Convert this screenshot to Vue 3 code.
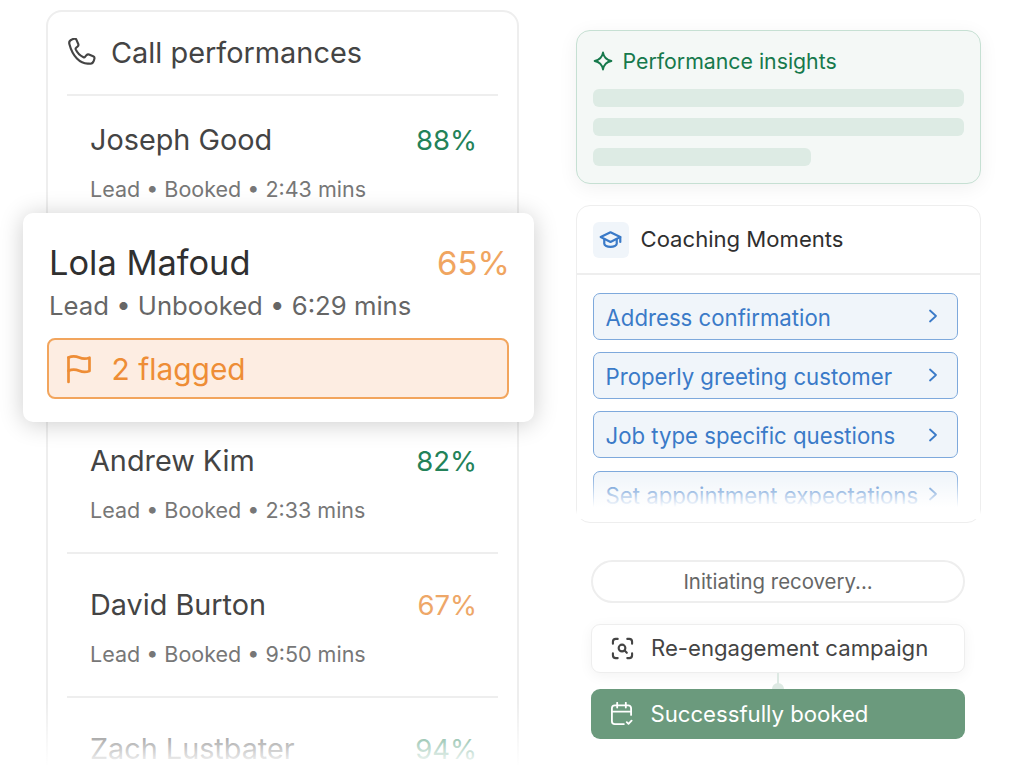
<template>
  <div class="page">
    <!-- Left column -->
    <section class="calls">
      <header class="calls-head">
        <svg class="phone" viewBox="2 1 23.500 23.500" fill="none" stroke="#444" stroke-width="1.800" stroke-linecap="round" stroke-linejoin="round">
          <path d="M3.200 6.200c-.5-1.800.4-3.400 2.100-4l1.600-.6c.9-.3 1.800.1 2.200 1l1.500 3.400c.3.800.1 1.600-.5 2.100l-1.300 1.100c-.4.300-.5.800-.3 1.300 1.300 3 3.500 5.200 6.500 6.600.5.200 1 .1 1.300-.3l1.200-1.400c.6-.6 1.400-.8 2.100-.5l3.500 1.500c.9.400 1.300 1.300 1 2.200l-.5 1.600c-.6 1.700-2.300 2.700-4 2.200C12 23.100 5.700 15.800 3.200 6.200Z" />
        </svg>
        <span>Call performances</span>
      </header>
      <div class="rows">
        <div v-for="row in rows" :key="row.name" class="row">
          <div class="row-top">
            <span class="name">{{ row.name }}</span>
            <span class="score" :class="row.tone">{{ row.score }}</span>
          </div>
          <div class="meta">{{ row.meta }}</div>
        </div>
      </div>
      <div class="calls-fade"></div>
    </section>

    <!-- Floating card over the list -->
    <div class="flagged-card">
      <div class="row-top">
        <span class="flagged-name">Lola Mafoud</span>
        <span class="flagged-score">65%</span>
      </div>
      <div class="flagged-meta">Lead • Unbooked • 6:29 mins</div>
      <div class="flag-bar">
        <svg class="flag" viewBox="0 0 26 30" fill="none" stroke="#ee8d36" stroke-width="2.700" stroke-linecap="round" stroke-linejoin="round">
          <path d="M2.500 28V3.500" />
          <path d="M2.500 3.500c3.800-1.800 7.200-1.500 10.700 0s6.800 1.500 10.300.2v13.300c-3.500 1.300-6.800 1.300-10.300-.2s-6.900-1.800-10.700 0" />
        </svg>
        <span>2 flagged</span>
      </div>
    </div>

    <!-- Right column -->
    <div class="side">
      <section class="insights">
        <div class="insights-title">
          <svg class="spark" viewBox="0 0 20 20" fill="none" stroke="#16794c" stroke-width="1.800" stroke-linejoin="round">
            <path d="M10 1.500c.8 4.800 3.500 7.600 8.400 8.500-4.900.9-7.600 3.700-8.400 8.500-.8-4.800-3.500-7.600-8.400-8.500 4.900-.9 7.600-3.700 8.400-8.500Z" />
          </svg>
          <span>Performance insights</span>
        </div>
        <div class="bar"></div>
        <div class="bar"></div>
        <div class="bar short"></div>
      </section>

      <section class="coaching">
        <header class="coaching-head">
          <div class="cap-box">
            <svg viewBox="0 0 24 24" fill="none" stroke="#3a7ac8" stroke-width="2.300" stroke-linecap="round" stroke-linejoin="round">
              <path d="M12 4.500 1.800 9.500 12 14.500l10.200-5L12 4.500Z" />
              <path d="M5.500 11.500v5c0 1.800 3 3.200 6.500 3.200s6.500-1.400 6.500-3.200v-5" />
              <path d="M22.200 9.500v5" />
            </svg>
          </div>
          <span class="coaching-title">Coaching Moments</span>
        </header>
        <div class="moments">
          <div v-for="item in moments" :key="item" class="moment">
            <span>{{ item }}</span>
            <svg class="chev" viewBox="0 0 10 16" fill="none" stroke="#3a7ac8" stroke-width="1.800" stroke-linecap="round" stroke-linejoin="round">
              <path d="M2 2.500 8 8l-6 5.500" />
            </svg>
          </div>
          <div class="moments-fade"></div>
        </div>
      </section>

      <div class="recovery">
        <div class="pill">Initiating recovery...</div>
        <div class="step">
          <svg class="step-icon" viewBox="0 0 24 24" fill="none" stroke="#444" stroke-width="2.200" stroke-linecap="round" stroke-linejoin="round">
            <path d="M2 7V5a3 3 0 0 1 3-3h2M17 2h2a3 3 0 0 1 3 3v2M22 17v2a3 3 0 0 1-3 3h-2M7 22H5a3 3 0 0 1-3-3v-2" />
            <circle cx="11.500" cy="11.500" r="3.500" />
            <path d="m14.200 14.200 2.300 2.300" />
          </svg>
          <span>Re-engagement campaign</span>
        </div>
        <div class="link"><i></i></div>
        <div class="booked">
          <svg class="step-icon" viewBox="0 0 24 24" fill="none" stroke="#fff" stroke-width="1.900" stroke-linecap="round" stroke-linejoin="round">
            <path d="M22 13.500V6.500a3 3 0 0 0-3-3H5a3 3 0 0 0-3 3V20a3 3 0 0 0 3 3h9.500" />
            <path d="M2 10h20M7.500 .8v5M16.500 .8v5" />
            <path d="m17.500 21 1.800 1.800 3.200-3.300" />
          </svg>
          <span>Successfully booked</span>
        </div>
      </div>
    </div>
  </div>
</template>

<script setup>
const rows = [
  { name: 'Joseph Good', score: '88%', tone: 'good', meta: 'Lead • Booked • 2:43 mins' },
  { name: 'Andrew Kim', score: '82%', tone: 'good', meta: 'Lead • Booked • 2:33 mins' },
  { name: 'David Burton', score: '67%', tone: 'warn', meta: 'Lead • Booked • 9:50 mins' },
  { name: 'Zach Lustbater', score: '94%', tone: 'good', meta: '' }
]

const moments = [
  'Address confirmation',
  'Properly greeting customer',
  'Job type specific questions',
  'Set appointment expectations'
]
</script>

<style>
html,
body {
  margin: 0;
  background: #fff;
  overflow: hidden;
}
</style>

<style scoped>
* {
  box-sizing: border-box;
}

.page {
  position: relative;
  display: flex;
  width: 1012px;
  height: 775px;
  padding: 10px 31px 0 46px;
  gap: 57px;
  overflow: hidden;
  background: #fff;
  font-family: Inter, "Liberation Sans", sans-serif;
}

/* Call list */
.calls {
  position: relative;
  flex: none;
  width: 473px;
  height: 790px;
  padding: 0 19px;
  border: 2px solid #eeeeee;
  border-radius: 16px;
  background: #fff;
}

.calls-head {
  display: flex;
  align-items: center;
  gap: 15px;
  height: 84px;
  padding: 0 0 2px 1px;
  border-bottom: 2px solid #eeeeee;
  font-size: 28.900px;
  color: #444;
}

.phone {
  flex: none;
  width: 28px;
  height: 28px;
}

.row {
  height: 144px;
  padding: 34px 21px 0 23px;
  border-bottom: 2px solid #eeeeee;
}

/* first row sits tighter, the gap after it is hidden under the floating card */
.row:first-child {
  height: 314px;
  padding-top: 27px;
}

.row:last-child {
  border-bottom: 0;
}

.row-top {
  display: flex;
  align-items: center;
  justify-content: space-between;
}

.name {
  font-size: 28.800px;
  line-height: 34px;
  color: #444;
}

.score {
  font-size: 27.500px;
  line-height: 34px;
}

.good {
  color: #238259;
}

.warn {
  color: #eea768;
}

.meta {
  margin-top: 19px;
  font-size: 21.500px;
  line-height: 26px;
  color: #777;
}

.calls-fade {
  position: absolute;
  left: -4px;
  right: -4px;
  top: 690px;
  height: 90px;
  background: linear-gradient(to bottom, rgba(255, 255, 255, 0), #fff 72%);
}

/* Floating card */
.flagged-card {
  position: absolute;
  left: 23px;
  top: 213px;
  width: 511px;
  height: 209px;
  padding: 30px 24px 0 26px;
  border-radius: 10px;
  background: #fff;
  box-shadow: 0 2px 24px rgba(0, 0, 0, 0.2);
}

.flagged-name {
  font-size: 34.400px;
  line-height: 40px;
  color: #303030;
}

.flagged-score {
  font-size: 33px;
  line-height: 40px;
  color: #f0a560;
}

.flagged-meta {
  margin-top: 7px;
  font-size: 25.700px;
  line-height: 32px;
  color: #666;
}

.flag-bar {
  display: flex;
  align-items: center;
  gap: 19.500px;
  height: 61px;
  margin: 16px 1px 0 -2px;
  padding-left: 17px;
  border: 2px solid #f2a55d;
  border-radius: 8px;
  background: #fdede2;
  font-size: 29.900px;
  color: #ee8d36;
}

.flag {
  flex: none;
  width: 26px;
  height: 30px;
}

/* Right column */
.side {
  display: flex;
  flex: none;
  flex-direction: column;
  width: 405px;
  padding-top: 20px;
}

.insights {
  height: 153.500px;
  padding: 0 16.500px 0 15.500px;
  border: 1.500px solid #c6e0d3;
  border-radius: 14px;
  background: #f4f8f6;
  box-shadow: 0 4px 20px rgba(0, 0, 0, 0.06);
}

.insights-title {
  display: flex;
  align-items: center;
  gap: 10px;
  height: 57.500px;
  padding-top: 3px;
  font-size: 21.300px;
  color: #16794c;
}

.spark {
  width: 20px;
  height: 20px;
}

.bar {
  height: 18px;
  margin-bottom: 11.700px;
  border-radius: 6px;
  background: #ddebe4;
}

.bar.short {
  width: 218px;
}

.coaching {
  height: 317.500px;
  margin-top: 21.500px;
  border: 1.500px solid #eeeeee;
  border-radius: 14px;
  background: #fff;
}

.coaching-head {
  display: flex;
  align-items: center;
  gap: 12px;
  height: 69px;
  padding: 0 15.500px;
  border-bottom: 2px solid #eeeeee;
  font-size: 22.100px;
  color: #2f2f2f;
}

.coaching-title {
  margin-top: -2px;
}

.cap-box {
  display: flex;
  align-items: center;
  justify-content: center;
  width: 36px;
  height: 36px;
  border-radius: 6px;
  background: #f0f5fa;
}

.cap-box svg {
  width: 23px;
  height: 23px;
}

.moments {
  position: relative;
  display: flex;
  flex-direction: column;
  gap: 12.400px;
  height: 244px;
  padding: 17.500px 22px 0 15.500px;
  overflow: hidden;
}

.moment {
  display: flex;
  flex: none;
  align-items: center;
  justify-content: space-between;
  height: 47px;
  padding: 2px 19px 0 12px;
  border: 1.500px solid #7ea9dc;
  border-radius: 7px;
  background: #f0f5fa;
  font-size: 22.200px;
  white-space: nowrap;
  color: #3a7ac8;
}

.chev {
  flex: none;
  width: 10px;
  height: 16px;
  margin-top: -2px;
}

.moments-fade {
  position: absolute;
  left: 0;
  right: 0;
  top: 199px;
  height: 46px;
  background: linear-gradient(to bottom, rgba(255, 255, 255, 0), #fff 72%);
}

/* Recovery flow */
.recovery {
  display: flex;
  flex-direction: column;
  width: 374px;
  margin: 37px 0 0 15px;
}

.pill {
  height: 43px;
  border: 2px solid #eeeeee;
  border-radius: 22px;
  background: #fff;
  font-size: 20.400px;
  line-height: 39px;
  text-align: center;
  color: #666;
}

.step,
.booked {
  display: flex;
  align-items: center;
  gap: 17px;
  height: 49px;
  padding-left: 19px;
  border-radius: 9px;
  font-size: 22.150px;
}

.step {
  margin-top: 21px;
  border: 1px solid #eeeeee;
  background: #fff;
  box-shadow: 0 3px 14px rgba(0, 0, 0, 0.05);
  color: #444;
}

.link {
  position: relative;
  width: 2px;
  height: 16px;
  margin: 0 auto;
  background: #dde9e3;
}

.link i {
  position: absolute;
  left: -5px;
  bottom: -6px;
  width: 12px;
  height: 12px;
  border-radius: 50%;
  background: #dde9e3;
}

.booked {
  position: relative;
  height: 50px;
  background: #6b9a7d;
  color: #fff;
}

.booked span {
  margin-left: 0.500px;
}

.step-icon {
  flex: none;
  width: 23px;
  height: 23px;
}
</style>
